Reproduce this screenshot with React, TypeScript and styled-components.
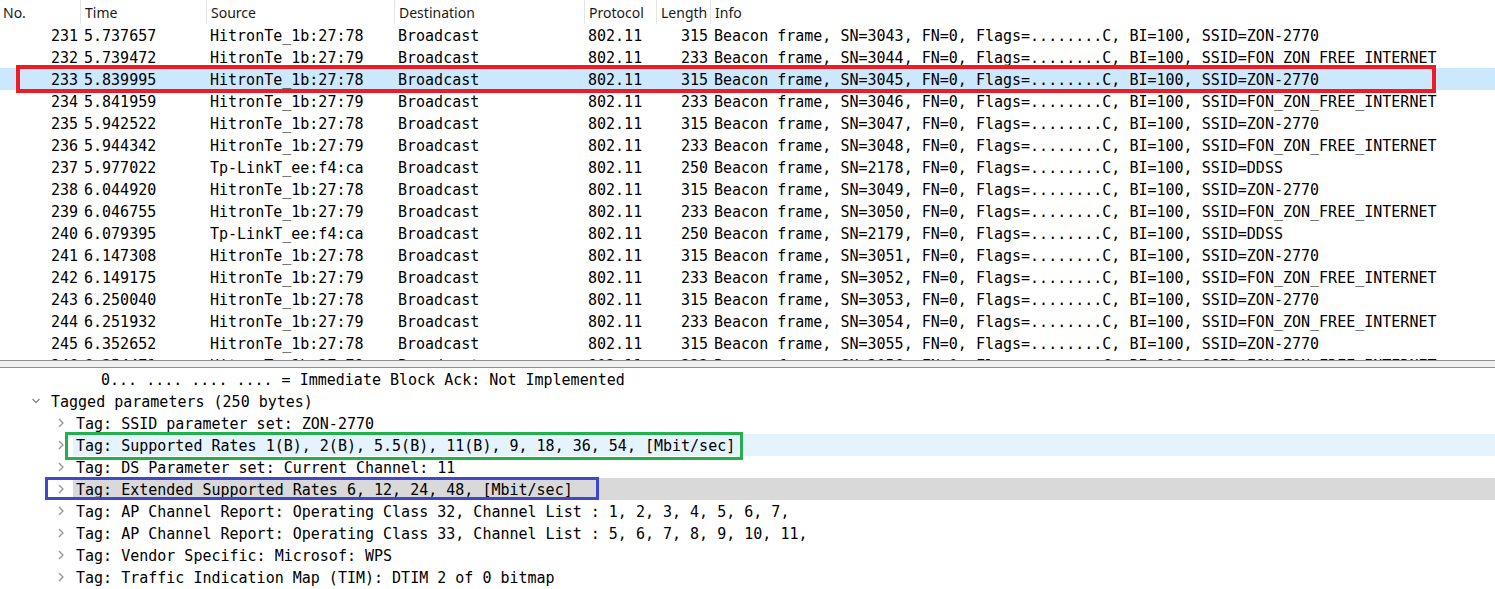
import styled, { createGlobalStyle } from "styled-components";

const GlobalStyle = createGlobalStyle`
  html, body {
    margin: 0;
    padding: 0;
    background: #ffffff;
    overflow: hidden;
  }
`;

const Page = styled.div`
  width: 1495px;
  height: 589px;
  display: flex;
  flex-direction: column;
  background: #ffffff;
  overflow: hidden;
`;

const columns = "81px 126px 188px 190px 72px 54px 1fr";

const PacketPane = styled.div`
  height: 360px;
  overflow: hidden;
  flex-shrink: 0;
`;

const HeaderRow = styled.div`
  display: grid;
  grid-template-columns: ${columns};
  height: 24px;
  font-family: "Noto Sans", "Open Sans", sans-serif;
  font-size: 14px;
  color: #1a1a1a;
`;

const HeaderCell = styled.div`
  display: flex;
  align-items: center;
  padding-left: 4px;
  border-right: 1px solid #e5e5e5;
  white-space: nowrap;
  overflow: hidden;
  &:first-child {
    padding-left: 3px;
  }
  &:last-child {
    border-right: none;
  }
`;

const PacketRow = styled.div<{ $selected?: boolean }>`
  position: relative;
  display: grid;
  grid-template-columns: ${columns};
  height: 22px;
  background: ${(p) => (p.$selected ? "#cce8ff" : "transparent")};
  font-family: "DejaVu Sans Mono", "Liberation Mono", monospace;
  font-size: 15px;
  line-height: 24px;
  color: #000;
`;

const Cell = styled.div<{ $right?: boolean }>`
  white-space: nowrap;
  overflow: hidden;
  height: 22px;
  text-align: ${(p) => (p.$right ? "right" : "left")};
  padding: ${(p) => (p.$right ? "0 3px 0 0" : "0 0 0 3px")};
`;

const Splitter = styled.div`
  height: 6px;
  flex-shrink: 0;
  background: #f0f0f0;
  border-top: 1px solid #8e8e8e;
  border-bottom: 1px solid #8e8e8e;
`;

const DetailPane = styled.div`
  flex: 1;
  overflow: hidden;
  font-family: "DejaVu Sans Mono", "Liberation Mono", monospace;
  font-size: 15px;
  color: #000;
`;

const DetailRow = styled.div<{ $level: number }>`
  position: relative;
  display: flex;
  align-items: center;
  height: 22px;
  padding-left: ${(p) => 26 + 25 * p.$level}px;
`;

const Toggle = styled.span`
  width: 22px;
  height: 22px;
  flex-shrink: 0;
  display: flex;
  align-items: center;
  padding-left: 5px;
  box-sizing: border-box;
`;

const DetailText = styled.span<{ $tone?: "hover" | "active" }>`
  flex: 1;
  height: 22px;
  line-height: 24px;
  overflow: hidden;
  padding-left: 3px;
  white-space: nowrap;
  background: ${(p) =>
    p.$tone === "hover" ? "#e5f3ff" : p.$tone === "active" ? "#d9d9d9" : "transparent"};
`;

const Annotation = styled.div<{ $color: string }>`
  position: absolute;
  box-sizing: border-box;
  border: 3px solid ${(p) => p.$color};
  pointer-events: none;
`;

const RedMark = styled(Annotation)`
  left: 16px;
  width: 1420px;
  top: -3px;
  bottom: -3px;
  border-width: 4px;
`;

const GreenMark = styled(Annotation)`
  left: 65px;
  width: 678px;
  top: -2px;
  bottom: -4px;
`;

const BlueMark = styled(Annotation)`
  left: 45px;
  width: 554px;
  top: -1px;
  bottom: 0px;
`;

function Chevron({ open }: { open?: boolean }) {
  return open ? (
    <svg width="10" height="10" viewBox="0 0 10 10">
      <path d="M1.5 3 L5 6.5 L8.5 3" fill="none" stroke="#8a8a8a" strokeWidth="1.4" />
    </svg>
  ) : (
    <svg width="10" height="10" viewBox="0 0 10 10">
      <path d="M3 1 L7 5 L3 9" fill="none" stroke="#9a9a9a" strokeWidth="1.4" />
    </svg>
  );
}

interface Packet {
  no: number;
  time: string;
  source: string;
  length: number;
  sn: number;
  ssid: string;
}

const A = "HitronTe_1b:27:78";
const B = "HitronTe_1b:27:79";
const T = "Tp-LinkT_ee:f4:ca";
const ZON = "ZON-2770";
const FON = "FON_ZON_FREE_INTERNET";

const packets: Packet[] = [
  { no: 231, time: "5.737657", source: A, length: 315, sn: 3043, ssid: ZON },
  { no: 232, time: "5.739472", source: B, length: 233, sn: 3044, ssid: FON },
  { no: 233, time: "5.839995", source: A, length: 315, sn: 3045, ssid: ZON },
  { no: 234, time: "5.841959", source: B, length: 233, sn: 3046, ssid: FON },
  { no: 235, time: "5.942522", source: A, length: 315, sn: 3047, ssid: ZON },
  { no: 236, time: "5.944342", source: B, length: 233, sn: 3048, ssid: FON },
  { no: 237, time: "5.977022", source: T, length: 250, sn: 2178, ssid: "DDSS" },
  { no: 238, time: "6.044920", source: A, length: 315, sn: 3049, ssid: ZON },
  { no: 239, time: "6.046755", source: B, length: 233, sn: 3050, ssid: FON },
  { no: 240, time: "6.079395", source: T, length: 250, sn: 2179, ssid: "DDSS" },
  { no: 241, time: "6.147308", source: A, length: 315, sn: 3051, ssid: ZON },
  { no: 242, time: "6.149175", source: B, length: 233, sn: 3052, ssid: FON },
  { no: 243, time: "6.250040", source: A, length: 315, sn: 3053, ssid: ZON },
  { no: 244, time: "6.251932", source: B, length: 233, sn: 3054, ssid: FON },
  { no: 245, time: "6.352652", source: A, length: 315, sn: 3055, ssid: ZON },
  { no: 246, time: "6.354471", source: B, length: 233, sn: 3056, ssid: FON },
];

interface Detail {
  level: number;
  text: string;
  toggle?: "open" | "closed";
  tone?: "hover" | "active";
  mark?: "green" | "blue";
}

const details: Detail[] = [
  { level: 2, text: "0... .... .... .... = Immediate Block Ack: Not Implemented" },
  { level: 0, text: "Tagged parameters (250 bytes)", toggle: "open" },
  { level: 1, text: "Tag: SSID parameter set: ZON-2770", toggle: "closed" },
  {
    level: 1,
    text: "Tag: Supported Rates 1(B), 2(B), 5.5(B), 11(B), 9, 18, 36, 54, [Mbit/sec]",
    toggle: "closed",
    tone: "hover",
    mark: "green",
  },
  { level: 1, text: "Tag: DS Parameter set: Current Channel: 11", toggle: "closed" },
  {
    level: 1,
    text: "Tag: Extended Supported Rates 6, 12, 24, 48, [Mbit/sec]",
    toggle: "closed",
    tone: "active",
    mark: "blue",
  },
  { level: 1, text: "Tag: AP Channel Report: Operating Class 32, Channel List : 1, 2, 3, 4, 5, 6, 7,", toggle: "closed" },
  { level: 1, text: "Tag: AP Channel Report: Operating Class 33, Channel List : 5, 6, 7, 8, 9, 10, 11,", toggle: "closed" },
  { level: 1, text: "Tag: Vendor Specific: Microsof: WPS", toggle: "closed" },
  { level: 1, text: "Tag: Traffic Indication Map (TIM): DTIM 2 of 0 bitmap", toggle: "closed" },
];

const headers = ["No.", "Time", "Source", "Destination", "Protocol", "Length", "Info"];

export default function App() {
  return (
    <Page>
      <GlobalStyle />
      <PacketPane>
        <HeaderRow>
          {headers.map((h) => (
            <HeaderCell key={h}>{h}</HeaderCell>
          ))}
        </HeaderRow>
        {packets.map((p) => (
          <PacketRow key={p.no} $selected={p.no === 233}>
            <Cell $right>{p.no}</Cell>
            <Cell>{p.time}</Cell>
            <Cell>{p.source}</Cell>
            <Cell>Broadcast</Cell>
            <Cell>802.11</Cell>
            <Cell $right>{p.length}</Cell>
            <Cell>
              Beacon frame, SN={p.sn}, FN=0, Flags=........C, BI=100, SSID={p.ssid}
            </Cell>
            {p.no === 233 && <RedMark $color="#ed1c24" />}
          </PacketRow>
        ))}
      </PacketPane>
      <Splitter />
      <DetailPane>
        {details.map((d, i) => (
          <DetailRow key={i} $level={d.level}>
            <Toggle>{d.toggle && <Chevron open={d.toggle === "open"} />}</Toggle>
            <DetailText $tone={d.tone}>{d.text}</DetailText>
            {d.mark === "green" && <GreenMark $color="#22b14c" />}
            {d.mark === "blue" && <BlueMark $color="#3f48cc" />}
          </DetailRow>
        ))}
      </DetailPane>
    </Page>
  );
}
